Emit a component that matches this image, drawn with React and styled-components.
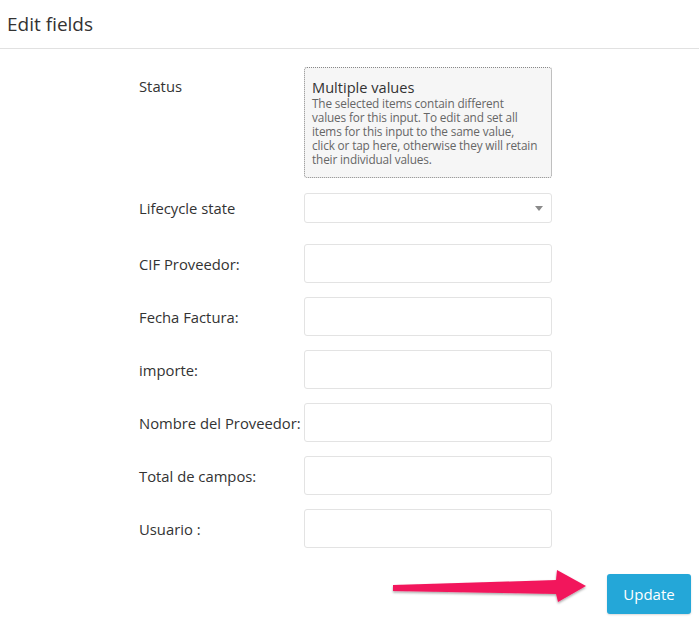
import React from "react";
import styled, { createGlobalStyle } from "styled-components";

const GlobalStyle = createGlobalStyle`
  html, body {
    margin: 0;
    padding: 0;
    background: #fff;
  }
  body {
    font-family: "Open Sans", "Noto Sans", sans-serif;
    color: #333;
  }
`;

const fields = [
  "CIF Proveedor:",
  "Fecha Factura:",
  "importe:",
  "Nombre del Proveedor:",
  "Total de campos:",
  "Usuario :",
];

const multiLines = [
  "The selected items contain different",
  "values for this input. To edit and set all",
  "items for this input to the same value,",
  "click or tap here, otherwise they will retain",
  "their individual values.",
];

function App() {
  return (
    <Dialog>
      <GlobalStyle />
      <Header>Edit fields</Header>
      <Form>
        <Row $top>
          <Label $top>Status</Label>
          <MultiBox>
            <MultiTitle>Multiple values</MultiTitle>
            {multiLines.map((l) => (
              <MultiText key={l}>{l}</MultiText>
            ))}
          </MultiBox>
        </Row>
        <Row $mt={15} $mb={21}>
          <Label>Lifecycle state</Label>
          <Select>
            <Caret />
          </Select>
        </Row>
        {fields.map((f) => (
          <Row key={f} $mb={14}>
            <Label>{f}</Label>
            <Input />
          </Row>
        ))}
      </Form>
      <Footer>
        <Arrow width="210" height="50" viewBox="0 0 210 50">
          <defs>
            <filter id="sh" x="-10%" y="-50%" width="120%" height="200%">
              <feDropShadow dx="0" dy="1.5" stdDeviation="1.2" floodColor="#000" floodOpacity="0.35" />
            </filter>
          </defs>
          <polygon
            points="8,23 171,18 172,8 201,24 173,40 171,32 8,29"
            fill="#f2165c"
            filter="url(#sh)"
          />
        </Arrow>
        <UpdateButton>Update</UpdateButton>
      </Footer>
    </Dialog>
  );
}

const Dialog = styled.div`
  width: 699px;
  height: 624px;
  background: #fff;
  position: relative;
  overflow: hidden;
`;

const Header = styled.div`
  height: 48px;
  border-bottom: 1px solid #e1e1e1;
  display: flex;
  align-items: center;
  padding-left: 7px;
  font-size: 19px;
  color: #333;
`;

const Form = styled.div`
  padding: 18px 0 0 139px;
  display: flex;
  flex-direction: column;
`;

const Row = styled.div`
  display: grid;
  grid-template-columns: 165px 248px;
  align-items: ${(p) => (p.$top ? "start" : "center")};
  margin-top: ${(p) => p.$mt || 0}px;
  margin-bottom: ${(p) => p.$mb || 0}px;
`;

const Label = styled.div`
  font-size: 14.8px;
  color: #333;
  white-space: nowrap;
  padding-top: ${(p) => (p.$top ? "9px" : "0")};
`;

const MultiBox = styled.div`
  box-sizing: border-box;
  height: 111px;
  border: 1px dotted #888;
  border-radius: 3px;
  background: #f6f6f6;
  padding: 10px 6px 0 7px;
`;

const MultiTitle = styled.div`
  font-size: 14.6px;
  line-height: 18px;
  color: #333;
`;

const MultiText = styled.div`
  font-size: 11.8px;
  line-height: 14px;
  color: #666;
  white-space: nowrap;
  letter-spacing: -0.15px;
`;

const Select = styled.div`
  box-sizing: border-box;
  height: 30px;
  border: 1px solid #e3e3e3;
  border-radius: 3px;
  background: #fff;
  display: flex;
  align-items: center;
  justify-content: flex-end;
  padding-right: 8px;
`;

const Caret = styled.span`
  width: 0;
  height: 0;
  border-left: 4.5px solid transparent;
  border-right: 4.5px solid transparent;
  border-top: 5px solid #8a8a8a;
`;

const Input = styled.div`
  box-sizing: border-box;
  height: 39px;
  border: 1px solid #e3e3e3;
  border-radius: 3px;
  background: #fff;
`;

const Footer = styled.div`
  position: relative;
  display: flex;
  justify-content: flex-end;
  padding: 12px 8px 0 0;
`;

const Arrow = styled.svg`
  position: absolute;
  left: 385px;
  top: 0;
`;

const UpdateButton = styled.button`
  width: 84px;
  height: 40px;
  border: none;
  border-radius: 3px;
  background: #24a7d8;
  color: #fff;
  font-family: "Open Sans", "Noto Sans", sans-serif;
  font-size: 15px;
  box-shadow: 0 1px 2px rgba(0, 0, 0, 0.15);
`;

export default App;
